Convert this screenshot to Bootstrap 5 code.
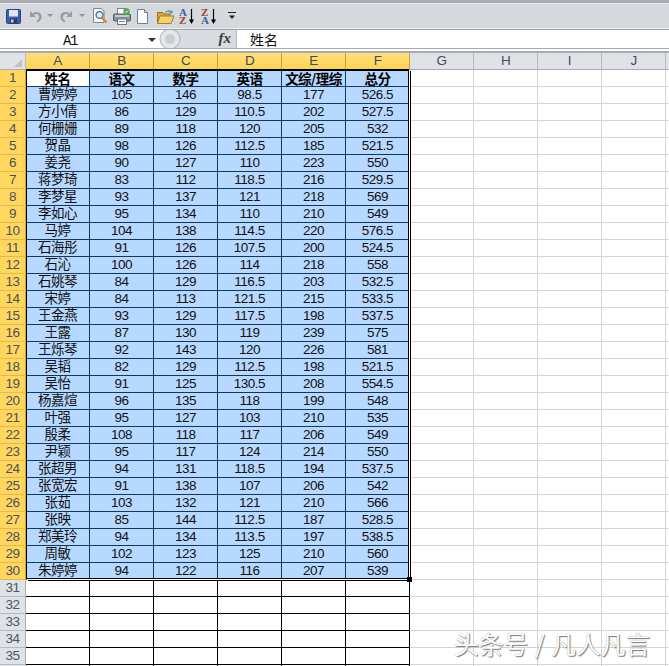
<!DOCTYPE html>
<html lang="zh">
<head>
<meta charset="utf-8">
<title>Excel</title>
<link href="https://cdn.jsdelivr.net/npm/bootstrap@5.3.0/dist/css/bootstrap.min.css" rel="stylesheet">
<style>
html,body{height:666px;overflow:hidden;background:#fff}
body{font-family:"Liberation Sans","Noto Sans CJK SC",sans-serif;font-size:13.5px;letter-spacing:-.5px;color:#111}
svg{display:block;flex:none}
svg text{font-family:"Liberation Serif",serif;font-weight:700;letter-spacing:0}
.qat{height:30px;border-top:3px solid #a9acb0;border-bottom:1px solid #9ea2a7;background:#d5d8dc;box-shadow:inset 0 1px #e6e8ea,inset 0 -1px #eceef0;padding-left:6px}
.fbar{height:18px}
.namebox{width:158px;height:18px;font-family:"Liberation Mono",monospace;font-size:14px;letter-spacing:-1.300px;line-height:18px;padding:2px 0 0 63px;position:relative}
.namebox::after{content:"";position:absolute;left:148px;top:8px;border:4px solid transparent;border-top:4px solid #333;border-bottom:0}
.fxband{width:79px;height:18px;background:#d8dbdf;border-right:1px solid #b5b9be;position:relative}
.fxglyph{font-family:"Liberation Serif",serif;font-style:italic;font-weight:700;font-size:15px;letter-spacing:0;line-height:18px;color:#3a3a3a;position:absolute;right:5px;top:-1px}
.fcontent{font-family:"Noto Sans CJK SC",sans-serif;font-size:14px;letter-spacing:0;line-height:18px;padding-left:13px}
.split{height:4px;border-top:1px solid #a6abb1;border-bottom:1px solid #a6abb1;background:#fff}
.sheetwrap{position:relative;height:614px;overflow:hidden}
table.sheet{border-collapse:separate;border-spacing:0;table-layout:fixed;width:730px}
.sheet th,.sheet td{padding:0;height:17px;line-height:16px;text-align:center;white-space:nowrap;font-weight:400;width:64px}
.sheet thead th{height:18px;background:#dfe2e6;border-top:1px solid #a9adb2;border-right:1px solid #b6babf;border-bottom:1px solid #a9adb2;color:#3f4c5c;line-height:16px}
.sheet thead th.hot{background:linear-gradient(#ffe07c,#ffd353);border-right-color:#c99e3c;border-bottom-color:#c99e3c;color:#404a55}
.sheet thead th.corner{width:26px;border-right-color:#b6babf;position:relative}
.corner::after{content:"";position:absolute;right:3px;bottom:2px;border-style:solid;border-width:0 0 8px 8px;border-color:transparent transparent #bfc2c6 transparent}
.sheet tbody th{width:26px;background:#dfe2e6;border-right:1px solid #a9adb2;border-bottom:1px solid #b6babf;color:#4a5766}
.sheet tbody tr.sel th{background:#ffd75f;border-right:1px solid #e29a2c;border-bottom:1px solid #e8b84c;color:#4a5158}
.sheet td{border-right:1px solid #000;border-bottom:1px solid #000;background:#fff}
.sheet tr.sel td{background:#b7d9ff;border-right-color:#12375f;border-bottom-color:#12375f}
.sheet tr.sel td:nth-child(n+8),.sheet td:nth-child(n+8){background:#fff;border-right-color:#d4d4d4;border-bottom-color:#d4d4d4}
.sheet tr.headrow td{font-family:"Noto Sans CJK SC",sans-serif;font-weight:700;color:#000}
.sheet tr.sel td.active{background:#fff;border-bottom-color:#12375f;border-right-color:#12375f}
.selbox{position:absolute;left:26px;top:17px;width:383px;height:510px;border-style:solid;border-color:#000;border-width:2px 1px 1px 1px;box-shadow:1px 1px 0 #fff,2px 2px 0 #000;pointer-events:none}
.handle{position:absolute;left:407px;top:525px;width:5px;height:5px;background:#000}
.wmark{position:absolute;left:454px;bottom:8px;font-family:"Noto Sans CJK SC",sans-serif;font-size:24.800px;letter-spacing:0;word-spacing:1px;line-height:30px;color:#fff;text-shadow:1px 1px 1px #777,0 0 1px #999;white-space:nowrap}
.m-u{margin-left:8px}.m-t{margin-left:5px}.m-r{margin-left:7px}.m-t2{margin-left:6px}.m-v{margin-left:7px}.m-p{margin-left:5px}.m-n{margin-left:6px}.m-f{margin-left:9px}.m-a{margin-left:4px}.m-z{margin-left:6px}.m-c{margin-left:11px}
</style>
</head>
<body class="m-0">
<div class="qat d-flex align-items-center">
<svg width="15" height="15" viewBox="0 0 15 15"><rect x=".5" y=".5" width="14" height="14" rx="1" fill="#3e5cae" stroke="#2a3f86"/><rect x="3" y="1" width="9" height="6.5" fill="#dfe6f5"/><rect x="4" y="9.5" width="7" height="5" fill="#2b3a63"/><rect x="5" y="10.5" width="2.5" height="3" fill="#c9d2e6"/></svg>
<svg class="m-u" width="13" height="13" viewBox="0 0 13 13"><path d="M1 1v6h6L4.800 4.800C7 3.300 9.600 4.300 10 6.600c.3 1.900-.8 3.500-2.600 4.400l1 1.500c3-1.200 4.600-3.700 4.200-6.400C12 2 7.500.6 3.400 3.400z" fill="#999ca0"/></svg>
<svg class="m-t" width="6" height="4" viewBox="0 0 6 4"><path d="M0 0h6L3 3z" fill="#8f9297"/></svg>
<svg class="m-r" width="13" height="13" viewBox="0 0 13 13"><path d="M12 1v6H6l2.200-2.200C6 3.300 3.400 4.300 3 6.600c-.3 1.900.8 3.500 2.600 4.400l-1 1.500c-3-1.200-4.600-3.700-4.200-6.400C1 2 5.500.6 9.600 3.400z" fill="#999ca0"/></svg>
<svg class="m-t2" width="6" height="4" viewBox="0 0 6 4"><path d="M0 0h6L3 3z" fill="#8f9297"/></svg>
<svg class="m-v" width="16" height="16" viewBox="0 0 16 16"><path d="M1.500.5h8l2.500 2.500v11.500H1.500z" fill="#f7f9fb" stroke="#7a8794"/><circle cx="7.500" cy="7" r="3.400" fill="#dcecf8" stroke="#54708c" stroke-width="1.300"/><path d="M10 10l4.500 4.500" stroke="#d98a24" stroke-width="2.400"/></svg>
<svg class="m-p" width="18" height="17" viewBox="0 0 18 17"><rect x="4.500" y=".5" width="8" height="6" fill="#fff" stroke="#7d8288"/><rect x=".5" y="6" width="17" height="7" rx="1" fill="#8c9196" stroke="#565b61"/><rect x="2" y="7" width="14" height="2" fill="#c4c8cc"/><rect x="4.500" y="11" width="9" height="5.500" fill="#fff" stroke="#6f747a"/><rect x="6" y="13" width="6" height="1" fill="#5b86b8"/><circle cx="13.500" cy="3.500" r="3.200" fill="#4fa64a"/><path d="M12 3.500l1.200 1.200 2-2.200" stroke="#fff" fill="none"/></svg>
<svg class="m-n" width="11" height="15" viewBox="0 0 11 15"><path d="M.5.500h7l3 3v11H.5z" fill="#fcfdfe" stroke="#6d7f92"/><path d="M7.500.500v3h3" fill="#dbe4ee" stroke="#6d7f92"/></svg>
<svg class="m-f" width="18" height="15" viewBox="0 0 18 15"><path d="M.5 3.500h5l1.500 1.500h6v9H.5z" fill="#d9a63a" stroke="#96701f"/><path d="M3 7h14l-3 7.500H.5z" fill="#f7d26a" stroke="#a87d24"/><path d="M8 3.500C9.500 1 12.500.5 14.500 2l1-1v3.500H12l1-1C11.500 2.500 9.800 2.500 8.600 4z" fill="#5c8fbf"/></svg>
<svg class="m-a" width="16" height="23" viewBox="0 -3 16 23"><text x="0" y="8" font-size="11" fill="#2f62ad">A</text><text x="0" y="16" font-size="11" fill="#a83a32">Z</text><path d="M12.500 1v13" stroke="#000" stroke-width="1.200"/><path d="M10 11.500h5L12.500 16z"/></svg>
<svg class="m-z" width="16" height="23" viewBox="0 -3 16 23"><text x="0" y="8" font-size="11" fill="#a83a32">Z</text><text x="0" y="16" font-size="11" fill="#2f62ad">A</text><path d="M12.500 1v13" stroke="#000" stroke-width="1.200"/><path d="M10 11.500h5L12.500 16z"/></svg>
<svg class="m-c" width="8" height="8" viewBox="0 0 8 8"><path d="M0 .5h8" stroke="#222"/><path d="M1 3.500h6L4 7z" fill="#222"/></svg>
</div>
<div class="fbar d-flex">
<div class="namebox">A1</div>
<div class="fxband"><svg width="26" height="18" viewBox="0 0 26 18"><path d="M16 -1A9.500 9.500 0 0 0 16 19H0V-1z" fill="#fff"/><circle cx="12" cy="9" r="10" fill="#e4e6e9" stroke="#a9adb2"/><circle cx="12" cy="9" r="5" fill="#c9ccd0"/></svg><span class="fxglyph">fx</span></div>
<div class="fcontent flex-grow-1">姓名</div>
</div>
<div class="split"></div>
<div class="sheetwrap">
<table class="sheet">
<thead><tr><th class="corner"></th><th class="hot">A</th><th class="hot">B</th><th class="hot">C</th><th class="hot">D</th><th class="hot">E</th><th class="hot">F</th><th>G</th><th>H</th><th>I</th><th>J</th><th></th></tr></thead>
<tbody>
<tr class="sel headrow"><th>1</th><td class="active">姓名</td><td>语文</td><td>数学</td><td>英语</td><td>文综/理综</td><td>总分</td><td></td><td></td><td></td><td></td><td></td></tr>
<tr class="sel"><th>2</th><td>曹婷婷</td><td>105</td><td>146</td><td>98.5</td><td>177</td><td>526.5</td><td></td><td></td><td></td><td></td><td></td></tr>
<tr class="sel"><th>3</th><td>方小倩</td><td>86</td><td>129</td><td>110.5</td><td>202</td><td>527.5</td><td></td><td></td><td></td><td></td><td></td></tr>
<tr class="sel"><th>4</th><td>何栅姗</td><td>89</td><td>118</td><td>120</td><td>205</td><td>532</td><td></td><td></td><td></td><td></td><td></td></tr>
<tr class="sel"><th>5</th><td>贺晶</td><td>98</td><td>126</td><td>112.5</td><td>185</td><td>521.5</td><td></td><td></td><td></td><td></td><td></td></tr>
<tr class="sel"><th>6</th><td>姜尧</td><td>90</td><td>127</td><td>110</td><td>223</td><td>550</td><td></td><td></td><td></td><td></td><td></td></tr>
<tr class="sel"><th>7</th><td>蒋梦琦</td><td>83</td><td>112</td><td>118.5</td><td>216</td><td>529.5</td><td></td><td></td><td></td><td></td><td></td></tr>
<tr class="sel"><th>8</th><td>李梦星</td><td>93</td><td>137</td><td>121</td><td>218</td><td>569</td><td></td><td></td><td></td><td></td><td></td></tr>
<tr class="sel"><th>9</th><td>李如心</td><td>95</td><td>134</td><td>110</td><td>210</td><td>549</td><td></td><td></td><td></td><td></td><td></td></tr>
<tr class="sel"><th>10</th><td>马婷</td><td>104</td><td>138</td><td>114.5</td><td>220</td><td>576.5</td><td></td><td></td><td></td><td></td><td></td></tr>
<tr class="sel"><th>11</th><td>石海彤</td><td>91</td><td>126</td><td>107.5</td><td>200</td><td>524.5</td><td></td><td></td><td></td><td></td><td></td></tr>
<tr class="sel"><th>12</th><td>石沁</td><td>100</td><td>126</td><td>114</td><td>218</td><td>558</td><td></td><td></td><td></td><td></td><td></td></tr>
<tr class="sel"><th>13</th><td>石姚琴</td><td>84</td><td>129</td><td>116.5</td><td>203</td><td>532.5</td><td></td><td></td><td></td><td></td><td></td></tr>
<tr class="sel"><th>14</th><td>宋婷</td><td>84</td><td>113</td><td>121.5</td><td>215</td><td>533.5</td><td></td><td></td><td></td><td></td><td></td></tr>
<tr class="sel"><th>15</th><td>王金燕</td><td>93</td><td>129</td><td>117.5</td><td>198</td><td>537.5</td><td></td><td></td><td></td><td></td><td></td></tr>
<tr class="sel"><th>16</th><td>王露</td><td>87</td><td>130</td><td>119</td><td>239</td><td>575</td><td></td><td></td><td></td><td></td><td></td></tr>
<tr class="sel"><th>17</th><td>王烁琴</td><td>92</td><td>143</td><td>120</td><td>226</td><td>581</td><td></td><td></td><td></td><td></td><td></td></tr>
<tr class="sel"><th>18</th><td>吴韬</td><td>82</td><td>129</td><td>112.5</td><td>198</td><td>521.5</td><td></td><td></td><td></td><td></td><td></td></tr>
<tr class="sel"><th>19</th><td>吴怡</td><td>91</td><td>125</td><td>130.5</td><td>208</td><td>554.5</td><td></td><td></td><td></td><td></td><td></td></tr>
<tr class="sel"><th>20</th><td>杨嘉煊</td><td>96</td><td>135</td><td>118</td><td>199</td><td>548</td><td></td><td></td><td></td><td></td><td></td></tr>
<tr class="sel"><th>21</th><td>叶强</td><td>95</td><td>127</td><td>103</td><td>210</td><td>535</td><td></td><td></td><td></td><td></td><td></td></tr>
<tr class="sel"><th>22</th><td>殷柔</td><td>108</td><td>118</td><td>117</td><td>206</td><td>549</td><td></td><td></td><td></td><td></td><td></td></tr>
<tr class="sel"><th>23</th><td>尹颖</td><td>95</td><td>117</td><td>124</td><td>214</td><td>550</td><td></td><td></td><td></td><td></td><td></td></tr>
<tr class="sel"><th>24</th><td>张超男</td><td>94</td><td>131</td><td>118.5</td><td>194</td><td>537.5</td><td></td><td></td><td></td><td></td><td></td></tr>
<tr class="sel"><th>25</th><td>张宽宏</td><td>91</td><td>138</td><td>107</td><td>206</td><td>542</td><td></td><td></td><td></td><td></td><td></td></tr>
<tr class="sel"><th>26</th><td>张茹</td><td>103</td><td>132</td><td>121</td><td>210</td><td>566</td><td></td><td></td><td></td><td></td><td></td></tr>
<tr class="sel"><th>27</th><td>张映</td><td>85</td><td>144</td><td>112.5</td><td>187</td><td>528.5</td><td></td><td></td><td></td><td></td><td></td></tr>
<tr class="sel"><th>28</th><td>郑美玲</td><td>94</td><td>134</td><td>113.5</td><td>197</td><td>538.5</td><td></td><td></td><td></td><td></td><td></td></tr>
<tr class="sel"><th>29</th><td>周敏</td><td>102</td><td>123</td><td>125</td><td>210</td><td>560</td><td></td><td></td><td></td><td></td><td></td></tr>
<tr class="sel"><th>30</th><td>朱婷婷</td><td>94</td><td>122</td><td>116</td><td>207</td><td>539</td><td></td><td></td><td></td><td></td><td></td></tr>
<tr><th>31</th><td></td><td></td><td></td><td></td><td></td><td></td><td></td><td></td><td></td><td></td><td></td></tr>
<tr><th>32</th><td></td><td></td><td></td><td></td><td></td><td></td><td></td><td></td><td></td><td></td><td></td></tr>
<tr><th>33</th><td></td><td></td><td></td><td></td><td></td><td></td><td></td><td></td><td></td><td></td><td></td></tr>
<tr><th>34</th><td></td><td></td><td></td><td></td><td></td><td></td><td></td><td></td><td></td><td></td><td></td></tr>
<tr><th>35</th><td></td><td></td><td></td><td></td><td></td><td></td><td></td><td></td><td></td><td></td><td></td></tr>
<tr><th></th><td></td><td></td><td></td><td></td><td></td><td></td><td></td><td></td><td></td><td></td><td></td></tr>
</tbody>
</table>
<div class="selbox"></div>
<div class="handle"></div>
</div>
<div class="wmark">头条号 / 凡人凡言</div>
</body>
</html>
